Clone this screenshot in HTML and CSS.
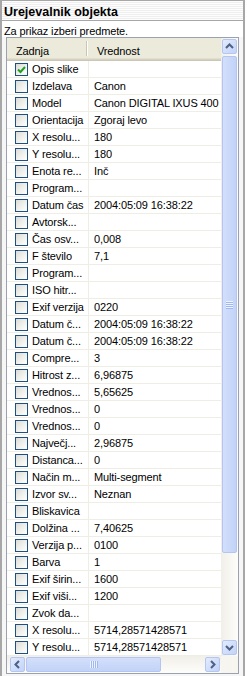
FILE: index.html
```html
<!DOCTYPE html>
<html lang="sl">
<head>
    <meta charset="UTF-8">
    <title>Urejevalnik objekta</title>
    <link rel="stylesheet" href="styles.css">
</head>
<body>
    <div class="panel">
        <div class="panel-title">Urejevalnik objekta</div>
        <div class="panel-info">Za prikaz izberi predmete.</div>
        <div class="list">
            <div class="table">
                <div class="table-head">
                    <div class="head-name">Zadnja</div>
                    <div class="head-sep"></div>
                    <div class="head-value">Vrednost</div>
                </div>
                <ul class="rows" id="rows"></ul>
            </div>
            <div class="vscroll">
                <div class="sb-btn">
                    <svg width="13" height="13" viewBox="0 0 13 13"><polyline points="3,8 6.5,4.5 10,8" /></svg>
                </div>
                <div class="vthumb"><span class="grip"></span></div>
                <div class="sb-btn sb-end">
                    <svg width="13" height="13" viewBox="0 0 13 13"><polyline points="3,5 6.5,8.5 10,5" /></svg>
                </div>
            </div>
            <div class="hscroll">
                <div class="sb-btn">
                    <svg width="13" height="13" viewBox="0 0 13 13"><polyline points="8,3 4.5,6.5 8,10" /></svg>
                </div>
                <div class="hthumb"><span class="grip"></span></div>
                <div class="sb-btn sb-end">
                    <svg width="13" height="13" viewBox="0 0 13 13"><polyline points="5,3 8.5,6.5 5,10" /></svg>
                </div>
            </div>
            <div class="corner"></div>
        </div>
    </div>

    <script>
        (function() {
            const props = [
                ['Opis slike', '', true],
                ['Izdelava', 'Canon'],
                ['Model', 'Canon DIGITAL IXUS 400'],
                ['Orientacija', 'Zgoraj levo'],
                ['X resolu...', '180'],
                ['Y resolu...', '180'],
                ['Enota re...', 'Inč'],
                ['Program...', ''],
                ['Datum čas', '2004:05:09 16:38:22'],
                ['Avtorsk...', ''],
                ['Čas osv...', '0,008'],
                ['F število', '7,1'],
                ['Program...', ''],
                ['ISO hitr...', ''],
                ['Exif verzija', '0220'],
                ['Datum č...', '2004:05:09 16:38:22'],
                ['Datum č...', '2004:05:09 16:38:22'],
                ['Compre...', '3'],
                ['Hitrost z...', '6,96875'],
                ['Vrednos...', '5,65625'],
                ['Vrednos...', '0'],
                ['Vrednos...', '0'],
                ['Največj...', '2,96875'],
                ['Distanca...', '0'],
                ['Način m...', 'Multi-segment'],
                ['Izvor sv...', 'Neznan'],
                ['Bliskavica', ''],
                ['Dolžina ...', '7,40625'],
                ['Verzija p...', '0100'],
                ['Barva', '1'],
                ['Exif širin...', '1600'],
                ['Exif viši...', '1200'],
                ['Zvok da...', ''],
                ['X resolu...', '5714,28571428571'],
                ['Y resolu...', '5714,28571428571']
            ];

            const rows = document.getElementById('rows');
            const check = '<svg width="11" height="11" viewBox="0 0 11 11"><polyline points="2,5.5 4.5,8 9,3" /></svg>';

            props.forEach(function(p) {
                const item = document.createElement('li');
                item.className = 'row';
                item.innerHTML = `
                    <div class="cell-name">
                        <span class="checkbox">${p[2] ? check : ''}</span>
                        <span class="name-text">${p[0]}</span>
                    </div>
                    <div class="cell-value">${p[1]}</div>
                `;
                rows.appendChild(item);
            });
        })();
    </script>
</body>
</html>
```

FILE: styles.css
```css
body {
    margin: 0;
    background-color: #fff;
    font-family: Tahoma, "Liberation Sans", Arial, sans-serif;
    font-size: 11px;
    letter-spacing: -0.12px;
    color: #000;
}
.panel {
    width: 245px;
    height: 676px;
    box-sizing: border-box;
    border: 2px solid #a7a7a7;
    border-top-width: 1px;
    border-bottom: none;
    background-color: #f6f6f6;
    display: flex;
    flex-direction: column;
    overflow: hidden;
}
.panel-title {
    height: 20px;
    box-sizing: border-box;
    padding: 3px 0 0 2px;
    border-bottom: 1px solid #a7a7a7;
    font-size: 12.5px;
    font-weight: bold;
    letter-spacing: 0;
    line-height: 17px;
    background: repeating-linear-gradient(#fdfdfd 0 1px, #efefef 1px 2px);
}
.panel-info {
    height: 16px;
    box-sizing: border-box;
    padding: 4px 0 0 2px;
    line-height: 12px;
    background-color: #fff;
}
.list {
    margin: 0 4px;
    height: 637px;
    box-sizing: border-box;
    border: 1px solid #9aa3ad;
    display: grid;
    grid-template-columns: 1fr 17px;
    grid-template-rows: 618px 17px;
    background-color: #fff;
}
.table {
    overflow: hidden;
}
.table-head {
    display: flex;
    height: 23px;
    line-height: 14px;
    background: linear-gradient(#ebeadb 0 20px, #e2decd 20px 21px, #d6d2c2 21px 22px, #cbc7b8 22px 23px);
}
.head-name {
    width: 79px;
    box-sizing: border-box;
    padding: 6px 0 0 9px;
}
.head-sep {
    width: 0;
    margin: 3px 0 5px;
    border-left: 1px solid #c9c6b3;
    border-right: 1px solid #fff;
}
.head-value {
    padding: 6px 0 0 9px;
}
.rows {
    list-style-type: none;
    margin: 0;
    padding: 0;
}
.row {
    display: flex;
    height: 17px;
    box-sizing: border-box;
    border-bottom: 1px solid #efeee4;
    line-height: 16px;
    white-space: nowrap;
}
.cell-name {
    width: 82px;
    flex-shrink: 0;
    box-sizing: border-box;
    padding-left: 8px;
    border-right: 1px solid #efeee4;
    display: flex;
    align-items: center;
    overflow: hidden;
}
.checkbox {
    width: 13px;
    height: 13px;
    box-sizing: border-box;
    flex-shrink: 0;
    margin-right: 4px;
    border: 1px solid #1c5180;
    background: linear-gradient(135deg, #dcdcd7 0%, #f2f2ef 60%, #fff 100%);
}
.checkbox svg {
    display: block;
    fill: none;
    stroke: #21a121;
    stroke-width: 2;
}
.cell-value {
    flex: 1;
    padding-left: 5px;
    overflow: hidden;
}
.vscroll {
    display: flex;
    flex-direction: column;
    background: linear-gradient(to right, #f1efe8, #fdfdfb);
}
.hscroll {
    display: flex;
    padding-left: 2px;
    background: linear-gradient(#f1efe8, #fdfdfb);
}
.corner {
    background-color: #f6f5f0;
}
.sb-btn {
    width: 15px;
    height: 15px;
    margin: 1px;
    box-sizing: border-box;
    border: 1px solid #b5c7f1;
    border-radius: 2px;
    background: linear-gradient(135deg, #e3ebfd, #c2d3f9);
    display: flex;
    align-items: center;
    justify-content: center;
    flex-shrink: 0;
}
.sb-btn svg {
    display: block;
    fill: none;
    stroke: #4d6185;
    stroke-width: 2;
}
.vscroll .sb-end {
    margin-top: auto;
}
.hscroll .sb-end {
    margin-left: auto;
}
.vthumb {
    width: 15px;
    height: 497px;
    margin: 1px 1px 0;
    box-sizing: border-box;
    border: 1px solid #b3c5f0;
    border-radius: 2px;
    background: linear-gradient(to right, #d3dffb, #c2d3f8);
    display: flex;
    align-items: center;
    justify-content: center;
}
.vthumb .grip {
    width: 7px;
    height: 8px;
    background: repeating-linear-gradient(#eef3fe 0 1px, #9db8f2 1px 2px);
}
.hthumb {
    width: 135px;
    height: 15px;
    margin: 1px 0;
    box-sizing: border-box;
    border: 1px solid #b3c5f0;
    border-radius: 2px;
    background: linear-gradient(#d3dffb, #c2d3f8);
    display: flex;
    align-items: center;
    justify-content: center;
}
.hthumb .grip {
    width: 8px;
    height: 7px;
    background: repeating-linear-gradient(to right, #eef3fe 0 1px, #9db8f2 1px 2px);
}
```
